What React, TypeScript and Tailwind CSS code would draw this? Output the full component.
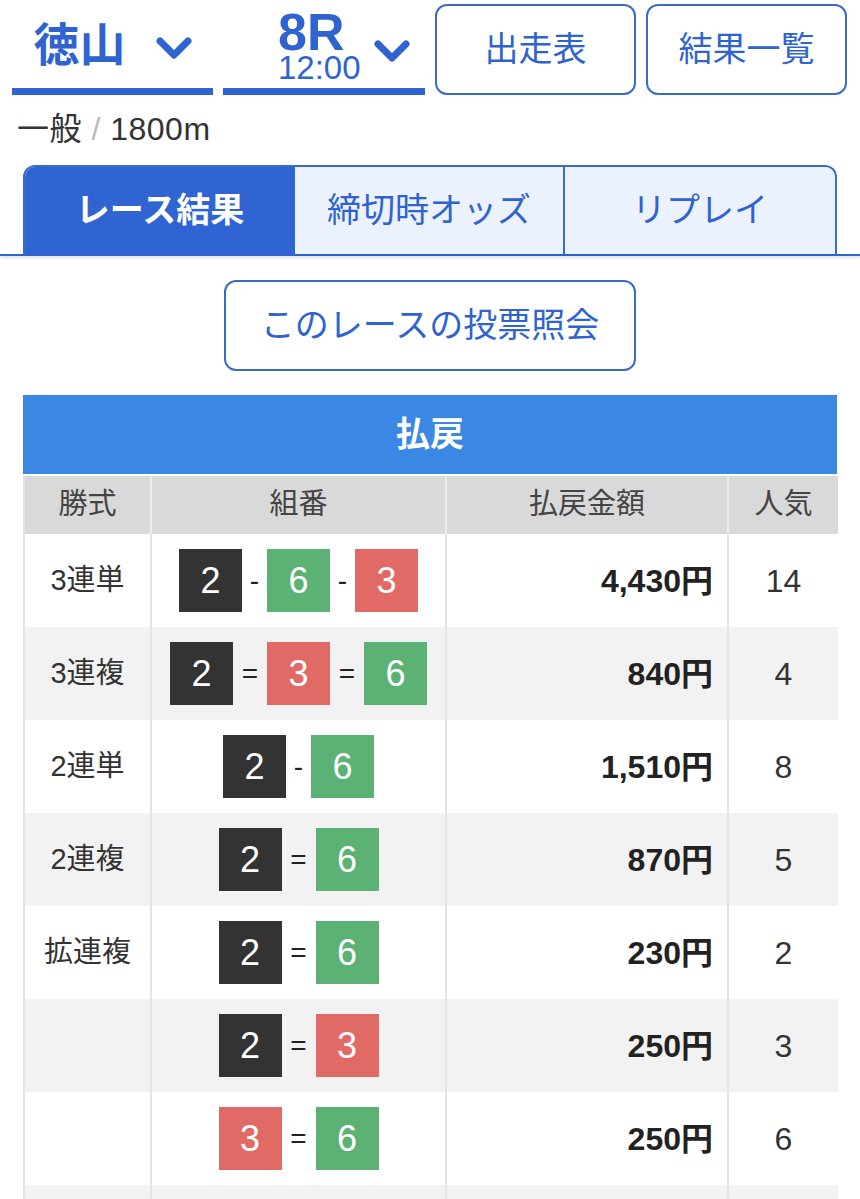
import React from "react";

const BLUE = "text-[#2f63cf]";

type Color = "k" | "g" | "r";

const boxBg: Record<Color, string> = {
  k: "bg-[#333333]",
  g: "bg-[#5bb274]",
  r: "bg-[#e26a66]",
};

interface Row {
  type: string;
  nums: [string, Color][];
  sep: "-" | "=";
  amount: string;
  pop: string;
}

const rows: Row[] = [
  { type: "3連単", nums: [["2", "k"], ["6", "g"], ["3", "r"]], sep: "-", amount: "4,430円", pop: "14" },
  { type: "3連複", nums: [["2", "k"], ["3", "r"], ["6", "g"]], sep: "=", amount: "840円", pop: "4" },
  { type: "2連単", nums: [["2", "k"], ["6", "g"]], sep: "-", amount: "1,510円", pop: "8" },
  { type: "2連複", nums: [["2", "k"], ["6", "g"]], sep: "=", amount: "870円", pop: "5" },
  { type: "拡連複", nums: [["2", "k"], ["6", "g"]], sep: "=", amount: "230円", pop: "2" },
  { type: "", nums: [["2", "k"], ["3", "r"]], sep: "=", amount: "250円", pop: "3" },
  { type: "", nums: [["3", "r"], ["6", "g"]], sep: "=", amount: "250円", pop: "6" },
];

function Chevron({ className = "" }: { className?: string }) {
  return (
    <svg width="36" height="24" viewBox="0 0 36 24" className={`shrink-0 ${className}`}>
      <path d="M4 4 L18 18 L32 4" fill="none" stroke="#2f63cf" strokeWidth="7" strokeLinecap="round" strokeLinejoin="round" />
    </svg>
  );
}

function Box({ n, c }: { n: string; c: Color }) {
  return (
    <div className={`w-[63px] h-[63px] flex items-center justify-center text-white text-[36px] ${boxBg[c]}`}>
      {n}
    </div>
  );
}

export default function App() {
  return (
    <div
      className="w-[860px] h-[1199px] overflow-hidden bg-white text-[#333]"
      style={{ fontFamily: '"Liberation Sans", "Noto Sans CJK JP", sans-serif' }}
    >
      {/* top selectors */}
      <div className="grid grid-cols-[201px_202px_201px_201px] gap-[10px] px-3 pt-1">
        <div className="h-[91px] flex items-center justify-center gap-[30px] border-b-[7px] border-[#2f63cf] pb-1">
          <span className={`${BLUE} text-[46px] font-bold leading-none mt-[2px]`}>徳山</span>
          <Chevron className="mt-[10px]" />
        </div>
        <div className="h-[91px] flex items-start pl-[55px] gap-[13px] border-b-[7px] border-[#2f63cf] pb-1">
          <div className={`${BLUE} flex flex-col items-start mt-[8px]`}>
            <span className="text-[52px] font-bold leading-[40px]">8R</span>
            <span className="text-[33px] leading-[28px] mt-[2px]">12:00</span>
          </div>
          <Chevron className="mt-[36px]" />
        </div>
        <button className={`h-[91px] rounded-[12px] border-2 border-[#3a6bc9] ${BLUE} text-[34px]`}>出走表</button>
        <button className={`h-[91px] rounded-[12px] border-2 border-[#3a6bc9] ${BLUE} text-[34px]`}>結果一覧</button>
      </div>

      <div className="pl-[17px] pt-[14px] text-[32px] leading-[40px] text-[#333] tracking-[0.5px]">
        一般 <span className="text-[#bbb]">/</span> 1800m
      </div>

      {/* tabs */}
      <div className="mt-[16px] border-b-2 border-[#2f63cf] shadow-[0_2px_3px_rgba(0,0,0,0.12)]">
        <div className="mx-[23px] grid grid-cols-3 h-[89px] rounded-t-[12px] overflow-hidden border-2 border-b-0 border-[#3a6bc9]">
          <div className="bg-[#2f64d2] text-white text-[34px] font-bold flex items-center justify-center">レース結果</div>
          <div className={`bg-[#ebf2fd] ${BLUE} text-[34px] flex items-center justify-center border-r-2 border-[#3a6bc9]`}>締切時オッズ</div>
          <div className={`bg-[#ebf2fd] ${BLUE} text-[34px] flex items-center justify-center`}>リプレイ</div>
        </div>
      </div>

      <div className="flex justify-center mt-[24px]">
        <button className={`w-[412px] h-[91px] rounded-[12px] border-2 border-[#3a6bc9] ${BLUE} text-[34px]`}>
          このレースの投票照会
        </button>
      </div>

      {/* payout table */}
      <div className="mx-[23px] mt-[24px]">
        <div className="h-[79px] bg-[#3a88e4] text-white text-[34px] font-bold flex items-center justify-center">払戻</div>
        <div className="grid grid-cols-[127px_295px_282px_109px] mt-[2px] border-l-2 border-r-2 border-[#e4e4e4]">
          {["勝式", "組番", "払戻金額", "人気"].map((h, i) => (
            <div
              key={h}
              className={`h-[58px] bg-[#d9d9d9] text-[#444] text-[29px] flex items-center justify-center ${i < 3 ? "border-r-2 border-[#ececec]" : ""}`}
            >
              {h}
            </div>
          ))}
          {rows.map((r, idx) => {
            const bg = idx % 2 === 0 ? "bg-white" : "bg-[#f2f2f2]";
            return (
              <React.Fragment key={idx}>
                <div className={`h-[93px] ${bg} border-r-2 border-[#e4e4e4] flex items-center justify-center text-[29px]`}>
                  {r.type}
                </div>
                <div className={`h-[93px] ${bg} border-r-2 border-[#e4e4e4] flex items-center justify-center`}>
                  {r.nums.map(([n, c], j) => (
                    <React.Fragment key={j}>
                      {j > 0 && (
                        <span className={`text-[28px] text-[#222] text-center ${r.sep === "-" ? "w-[25px]" : "w-[34px]"}`}>
                          {r.sep}
                        </span>
                      )}
                      <Box n={n} c={c} />
                    </React.Fragment>
                  ))}
                </div>
                <div className={`h-[93px] ${bg} border-r-2 border-[#e4e4e4] flex items-center justify-end pr-[14px] text-[32px] font-bold text-[#222]`}>
                  {r.amount}
                </div>
                <div className={`h-[93px] ${bg} flex items-center justify-center text-[32px]`}>{r.pop}</div>
              </React.Fragment>
            );
          })}
          {[0, 1, 2, 3].map((i) => (
            <div key={i} className={`h-[40px] bg-[#f2f2f2] ${i < 3 ? "border-r-2 border-[#e4e4e4]" : ""}`} />
          ))}
        </div>
      </div>
    </div>
  );
}
